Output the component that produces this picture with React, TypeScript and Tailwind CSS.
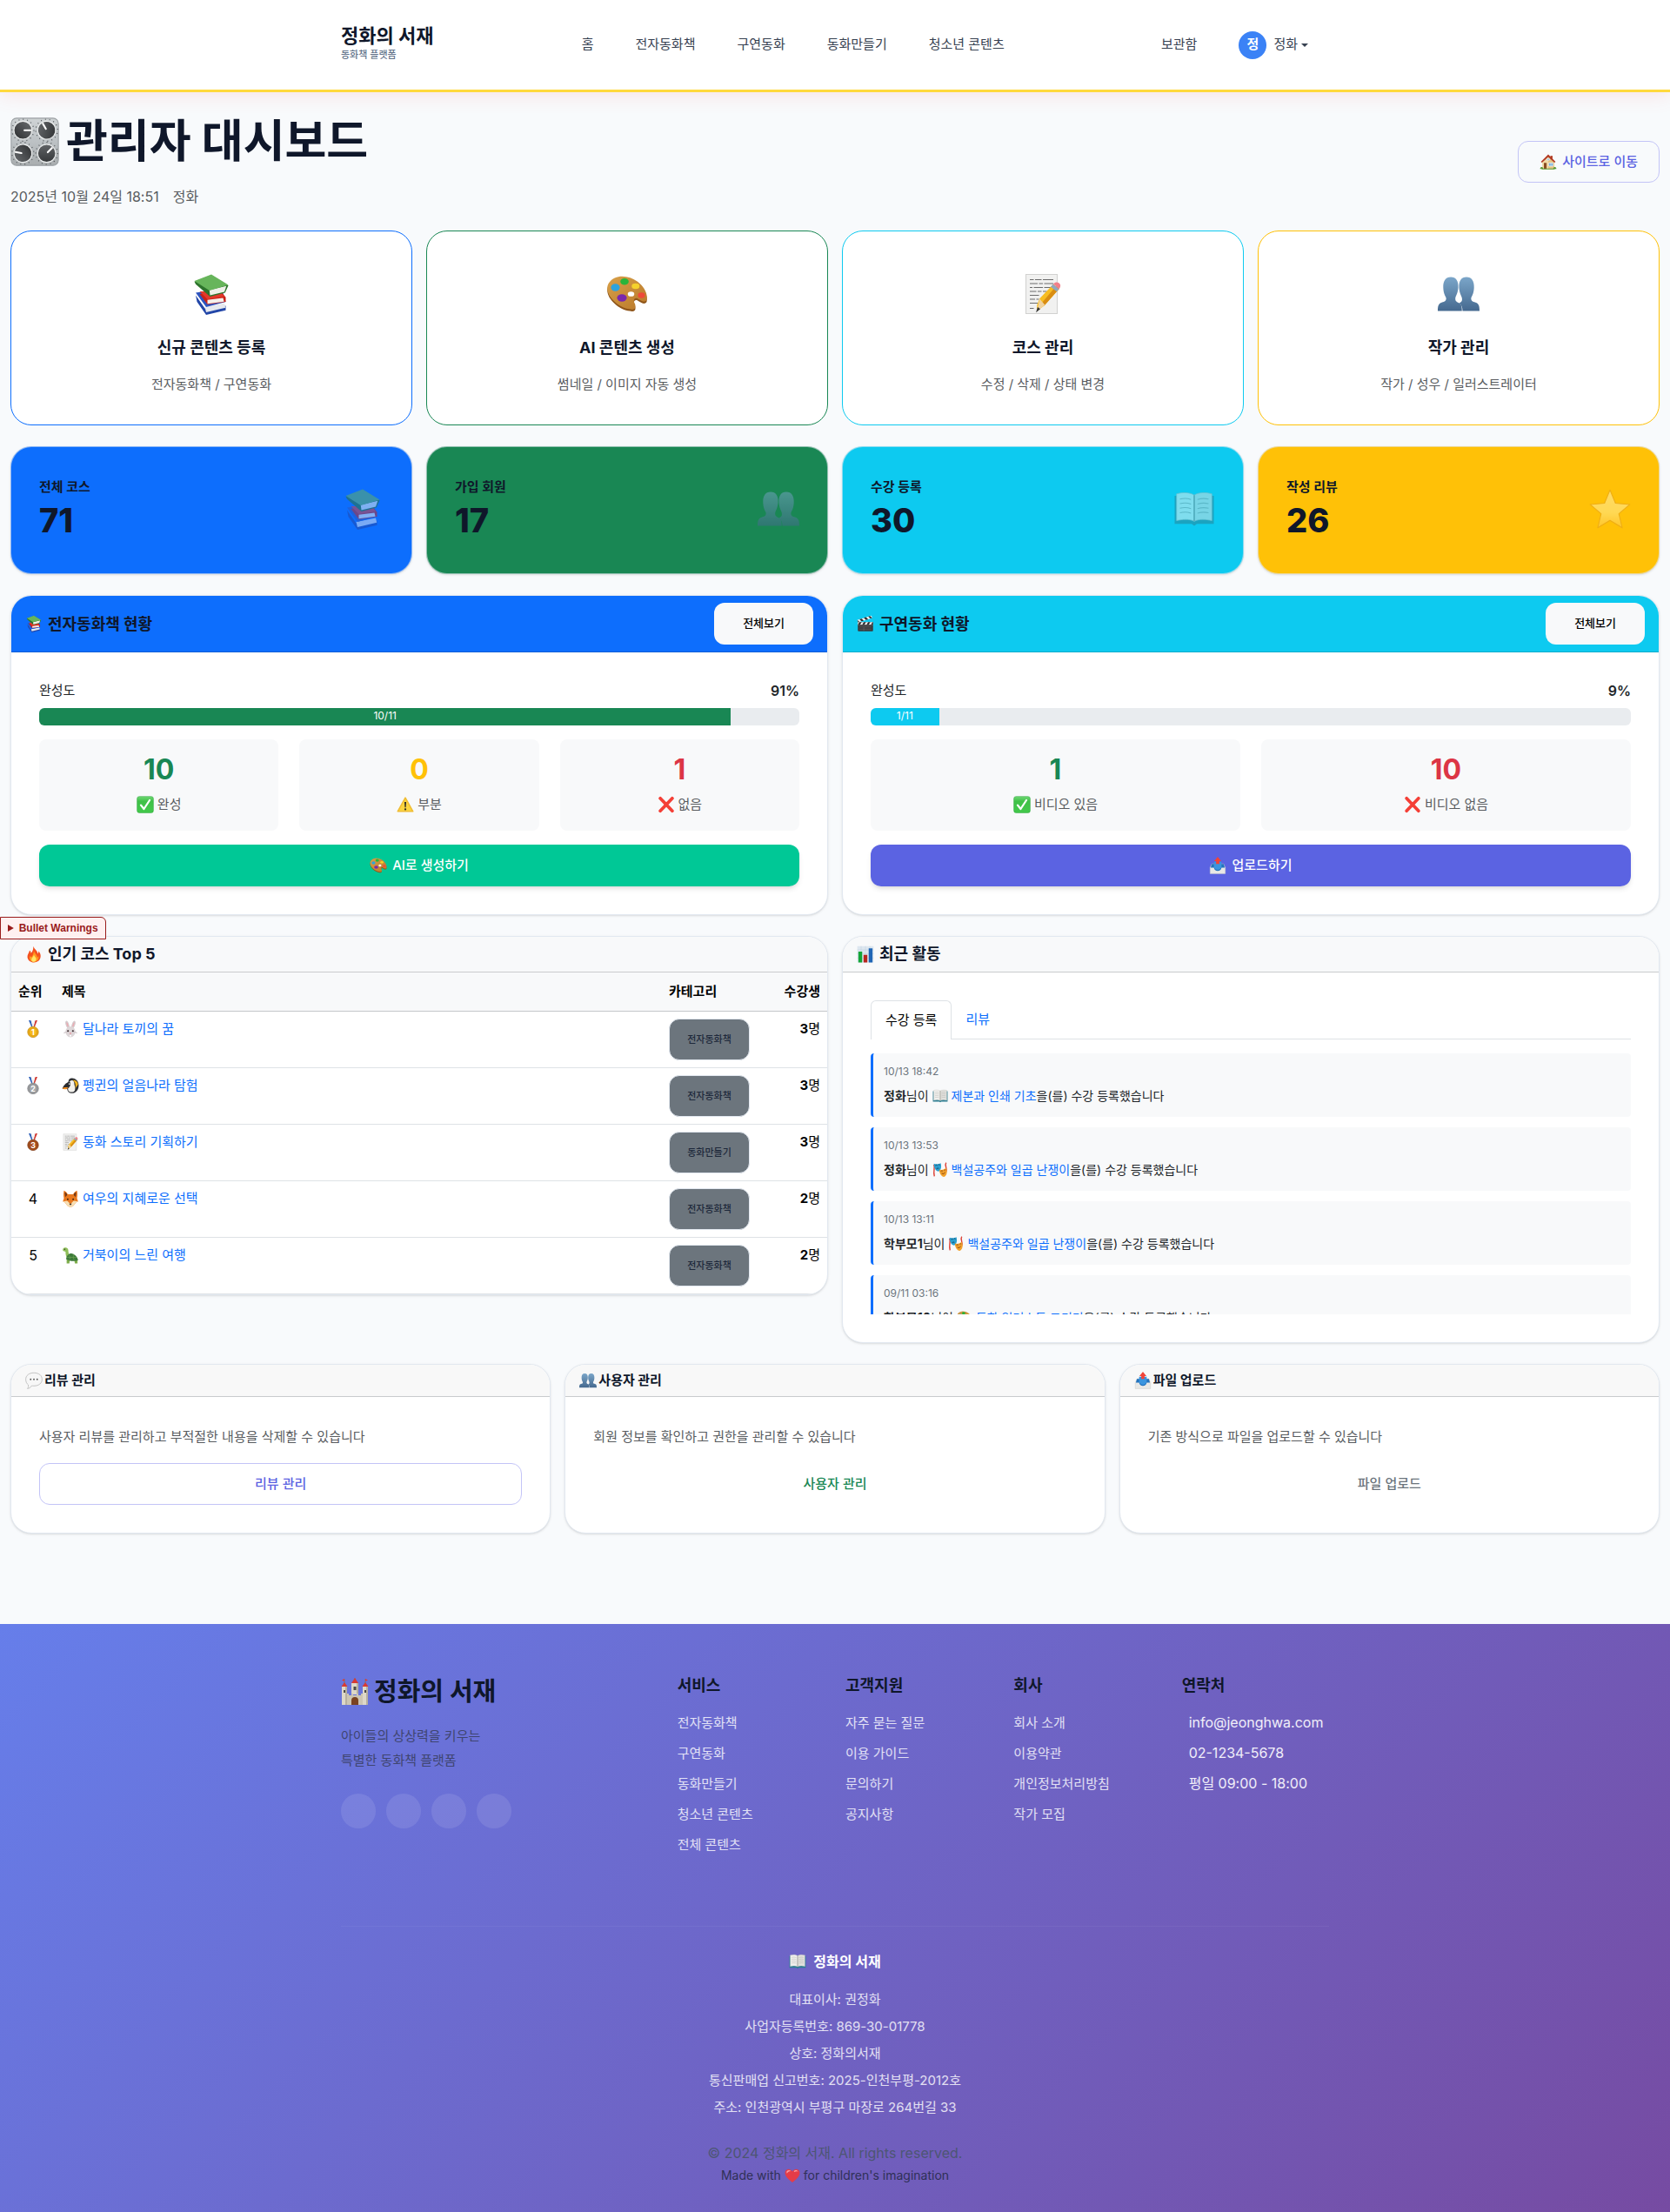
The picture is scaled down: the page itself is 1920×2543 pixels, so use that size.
import React from "react";

const SHAPES: Record<string, React.ReactNode> = {
  knobs: (
    <>
      <rect x="0.5" y="0.5" width="31" height="31" rx="3.5" fill="url(#metal)" stroke="#9a9fa2" strokeWidth="0.6" />
      {[[8.2, 8.4, 90], [23.8, 8.4, -30], [8.2, 23.6, -80], [23.8, 23.6, 45]].map(([x, y, a]) => (
        <g key={`${x}-${y}`} transform={`translate(${x} ${y}) rotate(${a})`}>
          <circle r="7.2" fill="none" stroke="#55595c" strokeWidth="0.7" strokeDasharray="0.6 2.2" />
          <circle r="5.9" fill="url(#knob)" stroke="#eceeee" strokeWidth="0.6" />
          <path d="M0-5V-1" stroke="#fff" strokeWidth="1.2" strokeLinecap="round" />
        </g>
      ))}
    </>
  ),
  house: (
    <>
      <path d="M20 5h4v7h-4z" fill="#b5452c" />
      <path d="M5 15 16 5l11 10v14H5z" fill="#f1d9a5" />
      <path d="M16 5l11 10v14H16z" fill="#e4c384" />
      <path d="M2.5 16 16 2.5 29.5 16l-2 1.5L16 7 4.500 17.500z" fill="#b23a24" />
      <path d="M8 18h5v11H8z" fill="#8a4b22" />
      <path d="M17 18h8v6h-8z" fill="#6fa9d8" stroke="#fff" />
      <path d="M21 18v6M14 10h4v3h-4z" stroke="#fff" fill="#6fa9d8" />
      <path d="M1 29c0-4 5-5 6 0zM25 29c1-5 6-4 6 0zM4 28.500h24v1.500H4z" fill="#5b9a36" />
    </>
  ),
  books: (
    <>
      <path d="m4 17 7 10 16-2v3.500L12 32 5 22z" fill="#2246a8" />
      <path d="m11 26 15-3 .8 3.500L12 30z" fill="#e6e9ef" />
      <path d="M4 15 24 12l3 10-15 4z" fill="#2d55bf" />
      <path d="m7 16 6 8 14-2v-3.500l-4-5z" fill="#c92117" />
      <path d="m13 20.500 12-1.500.7 2.800L13 23.500z" fill="#f4f0ea" />
      <path d="M7 14h16l3 4-13 2z" fill="#e3392b" />
      <path d="M3 6.500 16 1.500l13 8-2.500 5.500L15 18 4 8.500z" fill="#2d742c" />
      <path d="m14.500 13 13-3.200-1.500 4.600L15 17z" fill="#eef1e8" />
      <path d="M3 6 16 1l13 8-14.500 4.300z" fill="#67b55b" />
    </>
  ),
  palette: (
    <>
      <path d="M2 9c5-7 15-6 22-1 5 4 8 9 7 14-2 3-5 0-7-1s-4 1-2 4c1 3 0 5-4 4C9 28-3 17 2 9z" fill="#8f5519" />
      <path d="M2 7.500c5-7 15-6 22-1 5 4 8 9 7 14-2 3-5 0-7-1s-4 1-2 4c1 3 0 5-4 4C9 26.500-3 15.500 2 7.500z" fill="url(#wood)" />
      <ellipse cx="19" cy="16" rx="2.500" ry="1.900" fill="#fff" />
      <ellipse cx="7" cy="11" rx="3.400" ry="2.800" fill="#2ea3dd" />
      <ellipse cx="14" cy="6.500" rx="3.200" ry="2.500" fill="#28b53a" />
      <ellipse cx="22.500" cy="10" rx="3" ry="2.200" fill="#f5d12c" />
      <ellipse cx="27" cy="17" rx="2.700" ry="2.200" fill="#ee4a3b" />
      <ellipse cx="12" cy="19" rx="3.700" ry="2.800" fill="#7a28ad" />
    </>
  ),
  memo: (
    <>
      <path d="M3 1h24v30H3z" fill="#f1f1f0" stroke="#d2d2d0" strokeWidth="0.7" />
      <path d="M6 5h3m1 0h5m1 0h8M6 8h6m1 0h3m1 0h7M6 11h2m1 0h7m1 0h5M6 14h5m1 0h3m1 0h3M6 17h7M6 20h4m1 0h2M6 23h6M6 27h3" stroke="#6d6d6d" strokeWidth="0.7" />
      <path d="m11.500 24.500 2-5L24 8.500l4.500 3.500L17 25l-5.500 4z" fill="#f7bd22" />
      <path d="m17 25-1.500-2.500L26 10l2.500 2z" fill="#d98d12" />
      <path d="m22 10.500 1.800-2 4.600 3.600-1.800 2z" fill="#8fa8bf" />
      <path d="M24 8.300c3-3.300 7.500.2 4.400 3.800z" fill="#f0808a" />
      <path d="m13.500 19.700 4 4.600-6 5z" fill="#f0d3a0" />
      <path d="m12 26 2 1.500-3.300 2.700z" fill="#333" />
    </>
  ),
  people: (
    <g fill="url(#bust)">
      <path d="M10 3c4 0 6 3 5.700 8-.2 4-1.700 6-2.200 8-.3 2.500 1 3 3 4 1.500.8 2 2.500 2 6H0c0-4 .5-5.500 3-6.500 2.500-.8 3.600-1.200 3.400-3.500C5.500 17 4.300 15 4.200 11 4 6 6 3 10 3z" />
      <path d="M22 3c4 0 6 3 5.800 8-.1 4-1.300 6-2.200 8-.2 2.300.9 2.700 3.400 3.500 2.500 1 3 2.500 3 6.500H19c0-3-1-5-2.500-6 1.500-.8 2.500-1.500 2-4-.5-2-2-4-2.200-8C16 6 18 3 22 3z" />
    </g>
  ),
  star: <path d="m16 1.500 4.200 10.200 11 .9-8.400 7.200 2.600 10.700L16 24.800l-9.400 5.700 2.600-10.700-8.400-7.200 11-.9z" fill="url(#gold)" stroke="#e09a20" strokeWidth="0.7" strokeLinejoin="round" />,
  openbook: (
    <>
      <path d="M1 6h30v21.500H18L16 29l-2-1.500H1z" fill="#2a7d92" />
      <path d="M2.500 4.500C8 3 13 3.500 16 5.500v20c-4-2-9-1.500-13.500-.5z" fill="#f1f0ed" stroke="#b9b9b4" strokeWidth="0.5" />
      <path d="M29.500 4.500C24 3 19 3.500 16 5.500v20c4-2 9-1.500 13.500-.5z" fill="#e2e1dd" stroke="#b9b9b4" strokeWidth="0.5" />
      <path d="M16 5.500v20" stroke="#8e8e88" />
      <path d="M5 8.500c3-.7 6-.6 8.500.3M5 12c3-.7 6-.6 8.500.3M5 15.500c3-.7 6-.6 8.500.3M5 19c3-.7 6-.6 8.500.3M18.500 8.800c3-.9 5.500-1 8.500-.3M18.500 12.300c3-.9 5.500-1 8.500-.3M18.500 15.800c3-.9 5.500-1 8.500-.3M18.500 19.300c3-.9 5.500-1 8.500-.3" stroke="#a9a9a5" strokeWidth="0.7" fill="none" />
    </>
  ),
  clapper: (
    <>
      <rect x="2" y="13" width="28" height="17" rx="1.500" fill="#3a3a3c" />
      <path d="M2 13h28v5H2z" fill="#f2f2f2" />
      <path d="m5 13-3 5h4l3-5zm8 0-3 5h4l3-5zm8 0-3 5h4l3-5zm8 0-3 5h4v-5z" fill="#2b2b2d" />
      <path d="M1 9 27 1l1.500 4.500L2.500 13.500z" fill="#f2f2f2" />
      <path d="m5 7.800 4 3.700 4-1.200-4-3.700zm8-2.500 4 3.700 4-1.200-4-3.700zm8-2.500 4 3.700 3.500-1L24.500 2zM1 9l1.500 4.500L5 12.700z" fill="#2b2b2d" />
      <path d="M5 22h22M5 26h22M13 22v7" stroke="#77777b" strokeWidth="0.700" />
    </>
  ),
  check: (
    <>
      <rect x="1" y="1" width="30" height="30" rx="4" fill="url(#green)" stroke="#2aa33a" strokeWidth="0.8" />
      <path d="m8 17 5.500 7L24 8" fill="none" stroke="#fff" strokeWidth="3.600" strokeLinecap="round" strokeLinejoin="round" />
    </>
  ),
  warning: (
    <>
      <path d="M16 3.500 30 28.500H2z" fill="#fcd540" stroke="#f0bd35" strokeWidth="2.500" strokeLinejoin="round" />
      <path d="M14.300 11h3.400l-.8 10h-1.800z" fill="#2f2c25" />
      <circle cx="16" cy="24.700" r="1.800" fill="#2f2c25" />
    </>
  ),
  cross: <path d="m5 4.500 22 23m0-23-22 23" stroke="#f43f36" strokeWidth="6" strokeLinecap="round" />,
  outbox: (
    <>
      <path d="m5 13-3 7v11h28V20l-3-7z" fill="#e8e8e6" stroke="#c5c5c3" strokeWidth="0.7" />
      <path d="M5 13h22l2 7h-6c-1 4-3 6-7 6s-6-2-7-6H3z" fill="#2372bd" />
      <path d="M9 9h14v9c-1 4-3 6-7 6s-6-2-7-6z" fill="#3b95df" />
      <path d="m16 0 6.500 8H19v5h-6V8H9.500z" fill="#f04438" />
    </>
  ),
  fire: (
    <>
      <path d="M15 1c1 5 8 8 8 14 1-1 2-3 1.500-5C28 14 29 18 28 22c-1.300 6-6 9-12 9S4.500 27 4 21c-.3-5 3-7 4-12 2 1 2.500 3 2.500 5C14 11 15 6 15 1z" fill="#f4511e" />
      <path d="M16 9c0 5 6 7 6 13 1-.6 2-2 2.500-3 1 7-3 11-8.500 11-6 0-9.500-5-7.500-11 1 1 2 2 3 2 3-3 4-7 4.500-12z" fill="#ff9a1f" />
      <path d="M16 17c1 4 5 5 4 9-.7 3-2.500 4-4.500 4s-4.500-2-4-5 3.500-4 4.500-8z" fill="#ffe668" />
    </>
  ),
  rabbit: (
    <>
      <path d="M11 15C7 10 5 2 8 1s6 6 6.500 12zm10 0c4-5 6-13 3-14s-6 6-6.500 12z" fill="#d3cacd" />
      <path d="M11 12C9 8 8 4 9 3.500s3 4 3.500 8zm10 0c2-4 3-8 2-8.500s-3 4-3.500 8z" fill="#f0a9b0" />
      <path d="M16 11c6 0 9 5 9 10s-4 10-9 10-9-5-9-10 3-10 9-10z" fill="#ddd6d8" />
      <path d="M4 24c2-3 5-3 6-1m18 1c-2-3-5-3-6-1" stroke="#d3cacd" strokeWidth="2" fill="none" />
      <circle cx="11.500" cy="19.500" r="1.700" fill="#3b2b2e" /><circle cx="20.500" cy="19.500" r="1.700" fill="#3b2b2e" />
      <path d="M14 23h4l-2 2.500z" fill="#e87a85" /><path d="M14.500 27h3v2.500h-3z" fill="#fff" />
    </>
  ),
  penguin: (
    <>
      <path d="M13 5c7-6 17 0 18 9s-5 17-14 16c-6-1-8-7-7-13z" fill="#2f3135" />
      <path d="M15 8c4-3 8-1 8 4s3 7 1 13c-2 4-10 4-12 0-1-5-1-13 3-17z" fill="#f3f1ec" />
      <path d="M20 6c5 3 6 8 5 15l5-7c0-5-5-9-10-8z" fill="#f3b21b" />
      <path d="M15 9C10 9 4 14 1 21c3 2 8 2 12-1 3-3 4-8 2-11z" fill="#2b2d31" />
      <path d="M1 21c3-2 8-2 11-1-3 3-8 4-11 1z" fill="#f08c1f" />
      <circle cx="14" cy="13" r="1.300" fill="#fff" />
    </>
  ),
  fox: (
    <>
      <path d="M4 1c3 1 6 4 7 7h10c1-3 4-6 7-7 1 5 1 10 0 14l2 6-4 2c-3 5-6 8-10 8s-7-3-10-8l-4-2 2-6C3 11 3 6 4 1z" fill="#e9781e" />
      <path d="M5.500 4C8 5 9.500 7 10 9l-3.500 4zm21 0C24 5 22.500 7 22 9l3.500 4z" fill="#6c3516" />
      <path d="m2 21 8-1 6 6 6-6 8 1-4 2c-3 5-6 8-10 8s-7-3-10-8z" fill="#f7dfb4" />
      <circle cx="11" cy="17" r="1.500" fill="#301c10" /><circle cx="21" cy="17" r="1.500" fill="#301c10" />
      <path d="M13.500 25h5L16 28.500z" fill="#33211a" />
    </>
  ),
  turtle: (
    <>
      <path d="M8 2c-4-1-7 2-6 5 1 2 4 1 5 3 0 6 1 10 5 14l5-6c-4-3-5-7-5-11 0-3-2-4-4-5z" fill="#8fbf5a" />
      <path d="M9 23h6l-1 8H9zm14 0 6 1v7h-5z" fill="#7fae4c" />
      <path d="M8 23c1-7 6-11 11-10s10 6 11 12c-6 3-16 2-22-2z" fill="#3d7a3a" />
      <path d="M13 16c3 3 3 6 1 8m8-10c-1 4-1 8 1 11M10 20h17" stroke="#6fa551" fill="none" />
      <circle cx="5.500" cy="5" r="1" fill="#222" />
    </>
  ),
  chart: (
    <>
      <path d="M1 1h30v30H1z" fill="#dde7ef" />
      <path d="M1 8h30M1 15h30M1 23h30M8 1v30M16 1v30M24 1v30" stroke="#b8cddd" strokeWidth="0.7" />
      <path d="M3 11h7v20H3z" fill="#13a538" /><path d="M12.500 17h7v14h-7z" fill="#b8251e" /><path d="M22 5h7v26h-7z" fill="#1f65b5" />
    </>
  ),
  masks: (
    <>
      <path d="M3 5c3 6-2 12 1 24M28 1c-4 6 3 11 0 19" stroke="#dc3f34" strokeWidth="2.500" fill="none" />
      <path d="M3 3c5 2 10 1 14-1 2 7 1 15-5 17C6 18 3 10 3 3z" fill="#2a9fd0" />
      <path d="M6 7q2-2 4 0M12 6q2-2 3 0M8 14q3-3 5-1" stroke="#123f59" strokeWidth="1.500" fill="none" />
      <path d="M14 15c5 2 10 0 14-3 3 7 2 16-4 18-6 0-10-8-10-15z" fill="#f1a12b" />
      <path d="M17 19q2-2 4-1m3-1q2-2 3-1m-8 7q4 3 7-2" stroke="#7a3511" strokeWidth="1.500" fill="none" />
    </>
  ),
  bubble: (
    <>
      <path d="M16 2c9 0 15 5 15 12s-6 12-15 12c-2 0-3-.2-4-.4C10 29 7 31 4 31c2-2 2-4 1.500-7C2.500 22 1 18 1 14 1 7 7 2 16 2z" fill="#f7f7f7" stroke="#b3b3b3" strokeWidth="1.200" />
      <g fill="#555"><circle cx="10" cy="14" r="1.500" /><circle cx="16" cy="14" r="1.500" /><circle cx="22" cy="14" r="1.500" /></g>
    </>
  ),
  castle: (
    <>
      <path d="M4 1v7M16 0v6M28 1v7" stroke="#777" />
      <path d="m4 1-3 1.500L4 4zm24 0 3 1.500L28 4z" fill="#dd3b34" />
      <path d="m4 5 3.500 5h-7zm24 0 3.500 5h-7zM16 0l4 6h-8z" fill="#d83a32" />
      <path d="M1 10h6v21H1zm24 0h6v21h-6zM12 6h8v13h-8z" fill="#ded8c8" />
      <path d="M5 10h2v21H5zm24 0h2v21h-2zM18 6h2v13h-2z" fill="#b7b09f" />
      <path d="M7 18h2v2h3v-2h2v2h4v-2h2v2h3v-2h2v13H7z" fill="#cdc6b4" />
      <path d="M12 31v-5a4 4 0 0 1 8 0v5z" fill="#7a4321" />
      <path d="M3 14h2v3H3zm24 0h2v3h-2zM14.500 10h3v4h-3z" fill="#4d4a45" />
    </>
  ),
  heart: (
    <>
      <path d="M16 30C5 22 1 16 1 10c0-8 11-10 15-2C20 0 31 2 31 10c0 6-4 12-15 20z" fill="#e53c48" />
      <path d="M4 9c1-4 6-5 9-2-4 0-7 2-8 5zM19 7c3-3 7-2 9 1-3-1-6-1-8 1z" fill="#f8a4a8" />
    </>
  ),
};

const MEDALS: Record<string, [string, string]> = {
  "1": ["#f6b81c", "#b57a0b"],
  "2": ["#a5a7aa", "#6f7174"],
  "3": ["#ad5423", "#74330f"],
};

function Icon({ name, className }: { name: string; className: string }) {
  return (
    <svg viewBox="0 0 32 32" aria-hidden="true" fill="none" className={`inline-block shrink-0 ${className}`}>
      {SHAPES[name]}
    </svg>
  );
}

function Medal({ rank }: { rank: string }) {
  const [face, rim] = MEDALS[rank];
  return (
    <svg viewBox="0 0 32 32" role="img" aria-label={`${rank}위`} className="mx-auto my-0.5 size-5">
      <path d="m8 0 5 12h3L12 0z" fill="#2d5fb8" />
      <path d="m24 0-5 12h-3l4-12z" fill="#d23b34" />
      <path d="m12 0 3 12h2l3-12h-2l-2 6-2-6z" fill="#f1f1f1" />
      <circle cx="16" cy="21.500" r="10" fill={face} stroke={rim} />
      <circle cx="16" cy="21.500" r="7.500" fill="none" stroke={rim} strokeWidth="0.700" />
      <text x="16" y="26.500" textAnchor="middle" fontSize="14" fontWeight="700" fill="#fff">
        {rank}
      </text>
    </svg>
  );
}

function Defs() {
  return (
    <svg width="0" height="0" aria-hidden="true" className="absolute">
      <defs>
        <linearGradient id="metal" x2="0" y2="1"><stop stopColor="#cfd3d5" /><stop offset="0.500" stopColor="#bcc1c4" /><stop offset="1" stopColor="#a9adaf" /></linearGradient>
        <linearGradient id="knob" x2="1" y2="1"><stop stopColor="#6a6d70" /><stop offset="1" stopColor="#2c2e30" /></linearGradient>
        <linearGradient id="wood" x2="1" y2="1"><stop stopColor="#d8a049" /><stop offset="1" stopColor="#b9782a" /></linearGradient>
        <linearGradient id="bust" x2="0" y2="1"><stop stopColor="#7ba6c9" /><stop offset="1" stopColor="#45698f" /></linearGradient>
        <linearGradient id="gold" x2="0" y2="1"><stop stopColor="#fff6c8" /><stop offset="0.600" stopColor="#fff0a0" /><stop offset="1" stopColor="#ffc94a" /></linearGradient>
        <linearGradient id="green" x2="0" y2="1"><stop stopColor="#6fd873" /><stop offset="0.300" stopColor="#3fc148" /><stop offset="1" stopColor="#43c94b" /></linearGradient>
      </defs>
    </svg>
  );
}

const NAV = ["홈", "전자동화책", "구연동화", "동화만들기", "청소년 콘텐츠"];

function Header() {
  return (
    <header className="relative border-b-[3px] border-[#ffd93d] bg-white px-3 shadow-[0_4px_20px_rgba(255,107,107,0.15)]">
      <div className="mx-auto flex h-[103px] max-w-[1136px] items-center justify-between pr-6 text-[15px] text-[#374151]">
        <a href="#" className="block pb-1.5">
          <span className="block text-[22px] leading-7 font-bold text-[#0f172a]">정화의 서재</span>
          <span className="block text-[11px] leading-4 font-medium text-[#64748b]">동화책 플랫폼</span>
        </a>
        <nav className="mr-2.5 flex gap-12">
          {NAV.map((n) => (
            <a key={n} href="#">{n}</a>
          ))}
        </nav>
        <div className="flex items-center gap-12">
          <a href="#">보관함</a>
          <button type="button" className="flex items-center gap-2">
            <span className="flex size-8 items-center justify-center rounded-full bg-[#3b82f6] font-bold text-white">정</span>
            <span className="flex items-center gap-1">
              정화
              <svg viewBox="0 0 8 4" aria-hidden="true" className="h-1 w-2 fill-current"><path d="M0 0h8L4 4z" /></svg>
            </span>
          </button>
        </div>
      </div>
    </header>
  );
}

const ACTIONS = [
  { icon: "books", title: "신규 콘텐츠 등록", desc: "전자동화책 / 구연동화", border: "border-[#0d6efd]" },
  { icon: "palette", title: "AI 콘텐츠 생성", desc: "썸네일 / 이미지 자동 생성", border: "border-[#198754]" },
  { icon: "memo", title: "코스 관리", desc: "수정 / 삭제 / 상태 변경", border: "border-[#0dcaf0]" },
  { icon: "people", title: "작가 관리", desc: "작가 / 성우 / 일러스트레이터", border: "border-[#ffc107]" },
];

const STATS = [
  { icon: "books", label: "전체 코스", value: 71, bg: "bg-[#0d6efd]" },
  { icon: "people", label: "가입 회원", value: 17, bg: "bg-[#198754]" },
  { icon: "openbook", label: "수강 등록", value: 30, bg: "bg-[#0dcaf0]" },
  { icon: "star", label: "작성 리뷰", value: 26, bg: "bg-[#ffc107]" },
];

type Tally = { n: number; icon: string; label: string; color: string };
type StatusProps = {
  icon: string; title: string; head: string; done: number; total: number; bar: string;
  tallies: Tally[]; cols: string; action: string; actionIcon: string; actionBg: string;
};

const CARD = "overflow-hidden rounded-3xl border border-[#e2e8f0] bg-white shadow-sm";

function StatusCard(p: StatusProps) {
  const pct = Math.round((p.done / p.total) * 100);
  return (
    <section className={CARD}>
      <div className={`flex items-center justify-between border-b border-black/15 px-4 py-2 ${p.head}`}>
        <h2 className="flex items-center gap-1.5 text-[18px] font-bold text-[#0f172a]">
          <Icon name={p.icon} className="size-5" />
          {p.title}
        </h2>
        <button type="button" className="h-12 rounded-xl bg-[#f8f9fa] px-[33px] text-[13px] font-medium text-black">전체보기</button>
      </div>
      <div className="p-8">
        <div className="mb-2 flex justify-between text-[15px] leading-6">
          <span>완성도</span>
          <strong className="text-[16px] font-semibold">{pct}%</strong>
        </div>
        <div className="h-5 overflow-hidden rounded-md bg-[#e9ecef]">
          <div className={`h-full text-center text-[12px] leading-[17px] text-white ${p.bar}`} style={{ width: `${pct}%` }}>
            {p.done}/{p.total}
          </div>
        </div>
        <div className={`my-4 grid gap-6 ${p.cols}`}>
          {p.tallies.map((t) => (
            <div key={t.label} className="rounded-lg bg-[#f8f9fa] pt-[15px] pb-[18px] text-center">
              <div className={`text-[32px] leading-10 font-bold ${t.color}`}>{t.n}</div>
              <div className="mt-2 flex items-center justify-center gap-1 text-[15px] leading-6 text-[#595c5f]">
                <Icon name={t.icon} className="size-5" />
                {t.label}
              </div>
            </div>
          ))}
        </div>
        <button type="button" className={`flex h-12 w-full items-center justify-center gap-1.5 rounded-xl text-[15px] font-medium text-white shadow-md ${p.actionBg}`}>
          <Icon name={p.actionIcon} className="size-5" />
          {p.action}
        </button>
      </div>
    </section>
  );
}

const COURSES = [
  { icon: "rabbit", title: "달나라 토끼의 꿈", cat: "전자동화책", n: 3 },
  { icon: "penguin", title: "펭귄의 얼음나라 탐험", cat: "전자동화책", n: 3 },
  { icon: "memo", title: "동화 스토리 기획하기", cat: "동화만들기", n: 3 },
  { icon: "fox", title: "여우의 지혜로운 선택", cat: "전자동화책", n: 2 },
  { icon: "turtle", title: "거북이의 느린 여행", cat: "전자동화책", n: 2 },
];

function PanelHead({ icon, title }: { icon: string; title: string }) {
  return (
    <div className="border-b border-[#c9cbcd] bg-[#f8f9fa] px-4 py-2">
      <h2 className="flex items-center gap-1.5 text-[18px] leading-6 font-bold text-[#0f172a]">
        <Icon name={icon} className="size-5" />
        {title}
      </h2>
    </div>
  );
}

function TopCourses() {
  return (
    <section className={CARD}>
      <PanelHead icon="fire" title="인기 코스 Top 5" />
      <table className="w-full border-collapse text-[15px] leading-6 text-black">
        <thead className="bg-[#f8f9fa]">
          <tr className="h-11 border-b border-[#c4c7ca]">
            <th scope="col" className="w-[50px] px-2 text-left font-bold whitespace-nowrap">순위</th>
            <th scope="col" className="px-2 text-left font-bold">제목</th>
            <th scope="col" className="w-[132px] px-2 text-left font-bold">카테고리</th>
            <th scope="col" className="w-[58px] px-2 text-right font-bold whitespace-nowrap">수강생</th>
          </tr>
        </thead>
        <tbody>
          {COURSES.map((c, i) => (
            <tr key={c.title} className="border-b border-[#dee2e6] align-top">
              <td className="px-2 py-2 text-center text-[16px]">{i < 3 ? <Medal rank={String(i + 1)} /> : i + 1}</td>
              <td className="px-2 py-2">
                <a href="#" className="flex items-center gap-1 text-[#0d6efd]">
                  <Icon name={c.icon} className="size-5" />
                  {c.title}
                </a>
              </td>
              <td className="px-2 py-2">
                <span className="flex h-12 w-[93px] items-center justify-center rounded-xl border border-[#e2e8f0] bg-[#6c757d] text-[11px] font-medium text-[#1e293b]">{c.cat}</span>
              </td>
              <td className="px-2 py-2 text-right whitespace-nowrap"><strong>{c.n}</strong>명</td>
            </tr>
          ))}
        </tbody>
      </table>
    </section>
  );
}

const EVENTS = [
  { at: "10/13 18:42", who: "정화", icon: "openbook", what: "제본과 인쇄 기초" },
  { at: "10/13 13:53", who: "정화", icon: "masks", what: "백설공주와 일곱 난쟁이" },
  { at: "10/13 13:11", who: "학부모1", icon: "masks", what: "백설공주와 일곱 난쟁이" },
  { at: "09/11 03:16", who: "학부모10", icon: "palette", what: "동화 일러스트 그리기" },
];

function RecentActivity() {
  return (
    <section className={CARD}>
      <PanelHead icon="chart" title="최근 활동" />
      <div className="p-8">
        <div role="tablist" className="flex border-b border-[#dee2e6] text-[15px]">
          <button type="button" role="tab" aria-selected="true" className="-mb-px h-[45px] rounded-t-md border border-b-0 border-[#dee2e6] bg-white px-4 text-black">수강 등록</button>
          <button type="button" role="tab" aria-selected="false" className="h-11 px-4 text-[#0d6efd]">리뷰</button>
        </div>
        <ul className="mt-4 max-h-[300px] space-y-3 overflow-y-auto [scrollbar-width:none]">
          {EVENTS.map((e) => (
            <li key={e.at} className="rounded border-l-[3px] border-[#0d6efd] bg-[#f8f9fa] p-3">
              <time className="block text-[12px] leading-[18px] text-[#6c757d]">{e.at}</time>
              <p className="mt-[7px] flex items-center text-[14px] leading-6 whitespace-nowrap">
                <strong>{e.who}</strong>님이
                <Icon name={e.icon} className="mx-1 size-[18px]" />
                <a href="#" className="text-[#0d6efd]">{e.what}</a>을(를) 수강 등록했습니다
              </p>
            </li>
          ))}
        </ul>
      </div>
    </section>
  );
}

const TOOLS = [
  { icon: "bubble", title: "리뷰 관리", text: "사용자 리뷰를 관리하고 부적절한 내용을 삭제할 수 있습니다", style: "border border-[#c3c4f7] text-[#5b63e2]" },
  { icon: "people", title: "사용자 관리", text: "회원 정보를 확인하고 권한을 관리할 수 있습니다", style: "text-[#198754]" },
  { icon: "outbox", title: "파일 업로드", text: "기존 방식으로 파일을 업로드할 수 있습니다", style: "text-[#6c757d]" },
];

const LINKS = [
  { title: "서비스", items: ["전자동화책", "구연동화", "동화만들기", "청소년 콘텐츠", "전체 콘텐츠"] },
  { title: "고객지원", items: ["자주 묻는 질문", "이용 가이드", "문의하기", "공지사항"] },
  { title: "회사", items: ["회사 소개", "이용약관", "개인정보처리방침", "작가 모집"] },
];

const COMPANY = [
  "대표이사: 권정화",
  "사업자등록번호: 869-30-01778",
  "상호: 정화의서재",
  "통신판매업 신고번호: 2025-인천부평-2012호",
  "주소: 인천광역시 부평구 마장로 264번길 33",
];

function Footer() {
  return (
    <footer className="bg-[linear-gradient(135deg,#667eea_0%,#764ba2_100%)] px-3 pt-14 pb-[29px]">
      <div className="mx-auto max-w-[1136px]">
        <div className="grid grid-cols-12 gap-6">
          <div className="col-span-4">
            <h2 className="flex items-center gap-1.5 text-[29px] leading-[44px] font-bold text-[#0f172a]">
              <Icon name="castle" className="size-8" />
              정화의 서재
            </h2>
            <p className="mt-[15px] text-[15px] leading-7 text-[#3f4570]">
              아이들의 상상력을 키우는
              <br />
              특별한 동화책 플랫폼
            </p>
            <div className="mt-6 flex gap-3">
              {["Facebook", "Instagram", "YouTube", "Blog"].map((s) => (
                <a key={s} href="#" aria-label={s} className="size-10 rounded-full bg-white/10" />
              ))}
            </div>
          </div>
          {LINKS.map((col) => (
            <div key={col.title} className="col-span-2">
              <h3 className="mb-[14px] text-[18px] leading-[30px] font-bold text-[#0f172a]">{col.title}</h3>
              <ul className="space-y-2 text-[15px] leading-[27px] whitespace-nowrap text-white/80">
                {col.items.map((t) => (
                  <li key={t}><a href="#">{t}</a></li>
                ))}
              </ul>
            </div>
          ))}
          <div className="col-span-2">
            <h3 className="mb-[14px] text-[18px] leading-[30px] font-bold text-[#0f172a]">연락처</h3>
            <ul className="space-y-2 pl-2 text-[16px] leading-[27px] whitespace-nowrap text-white/90">
              <li>info@jeonghwa.com</li>
              <li>02-1234-5678</li>
              <li>평일 09:00 - 18:00</li>
            </ul>
          </div>
        </div>
        <div className="mt-20 border-t border-white/5 pt-6 text-center">
          <h3 className="flex items-center justify-center gap-2 text-[16px] leading-8 font-bold text-white">
            <Icon name="openbook" className="size-5" />
            정화의 서재
          </h3>
          <div className="mt-3 text-[15px] leading-[31px] text-white/80">
            {COMPANY.map((l) => (
              <p key={l}>{l}</p>
            ))}
          </div>
          <p className="mt-6 text-[16px] leading-[26px] text-[#4d5673]">© 2024 정화의 서재. All rights reserved.</p>
          <p className="flex items-center justify-center gap-1 text-[14px] leading-[26px] text-[#2f3057]">
            Made with
            <Icon name="heart" className="size-[18px]" />
            for children's imagination
          </p>
        </div>
      </div>
    </footer>
  );
}

export default function App() {
  return (
    <div className="relative min-h-screen bg-[#f8fafc] font-['Inter','Noto_Sans_CJK_KR',sans-serif] text-[#212529]">
      <Defs />
      <Header />
      <main className="px-3 pt-7 pb-[104px]">
        <div className="mb-[27px] flex items-center justify-between">
          <div>
            <h1 className="flex items-center gap-2 text-[52px] leading-[58px] font-bold text-[#0f172a]">
              <Icon name="knobs" className="size-14" />
              관리자 대시보드
            </h1>
            <p className="mt-[22px] flex gap-4 text-[16px] leading-6 text-[#595c5f]">
              <span>2025년 10월 24일 18:51</span>
              <span>정화</span>
            </p>
          </div>
          <a href="#" className="flex h-12 items-center gap-1.5 rounded-xl border border-[#c3c4f7] px-6 text-[15px] font-medium text-[#5b63e2]">
            <Icon name="house" className="size-5" />
            사이트로 이동
          </a>
        </div>

        <div className="flex flex-col gap-6">
          <div className="grid grid-cols-4 gap-4">
            {ACTIONS.map((a) => (
              <a key={a.title} href="#" className={`rounded-3xl border bg-white px-8 pt-8 pb-[34px] text-center ${a.border}`}>
                <span className="flex h-20 items-center justify-center"><Icon name={a.icon} className="size-12" /></span>
                <span className="mt-2 block text-[18px] leading-7 font-bold text-[#0f172a]">{a.title}</span>
                <span className="mt-4 block text-[15px] leading-6 text-[#595c5f]">{a.desc}</span>
              </a>
            ))}
          </div>

          <div className="grid grid-cols-4 gap-4">
            {STATS.map((s) => (
              <div key={s.label} className={`flex items-center justify-between rounded-3xl border border-[#e2e8f0]/60 px-8 pt-[34px] pb-[37px] text-[#0f172a] shadow-sm ${s.bg}`}>
                <div>
                  <h2 className="text-[15px] leading-6 font-bold">{s.label}</h2>
                  <p className="mt-0.5 text-[38px] leading-[48px] font-extrabold">{s.value}</p>
                </div>
                <Icon name={s.icon} className="size-12 opacity-50" />
              </div>
            ))}
          </div>

          <div className="grid grid-cols-2 gap-4">
            <StatusCard
              icon="books" title="전자동화책 현황" head="bg-[#0d6efd]" done={10} total={11} bar="bg-[#198754]" cols="grid-cols-3"
              tallies={[
                { n: 10, icon: "check", label: "완성", color: "text-[#198754]" },
                { n: 0, icon: "warning", label: "부분", color: "text-[#ffc107]" },
                { n: 1, icon: "cross", label: "없음", color: "text-[#dc3545]" },
              ]}
              action="AI로 생성하기" actionIcon="palette" actionBg="bg-[#00c896]"
            />
            <StatusCard
              icon="clapper" title="구연동화 현황" head="bg-[#0dcaf0]" done={1} total={11} bar="bg-[#0dcaf0]" cols="grid-cols-2"
              tallies={[
                { n: 1, icon: "check", label: "비디오 있음", color: "text-[#198754]" },
                { n: 10, icon: "cross", label: "비디오 없음", color: "text-[#dc3545]" },
              ]}
              action="업로드하기" actionIcon="outbox" actionBg="bg-[#5b63e2]"
            />
          </div>

          <div className="grid grid-cols-2 items-start gap-4">
            <TopCourses />
            <RecentActivity />
          </div>

          <div className="grid grid-cols-3 gap-4">
            {TOOLS.map((t) => (
              <section key={t.title} className={CARD}>
                <h2 className="flex items-center gap-0.5 border-b border-[#c9cbcd] bg-[#f8f8f8] px-4 py-2 text-[15px] leading-5 font-bold text-[#0f172a]">
                  <Icon name={t.icon} className="size-5" />
                  {t.title}
                </h2>
                <div className="p-8">
                  <p className="text-[15px] leading-7 text-[#595c5f]">{t.text}</p>
                  <button type="button" className={`mt-4 h-12 w-full rounded-xl text-[15px] font-medium ${t.style}`}>{t.title}</button>
                </div>
              </section>
            ))}
          </div>
        </div>
      </main>
      <Footer />
      <details className="absolute top-[1054px] left-0 rounded-tr-md border border-[#991b1b] bg-[#fff0f0] px-2 py-1 font-['Liberation_Sans',sans-serif] text-[12px] leading-4 font-bold text-[#991b1b]">
        <summary>Bullet Warnings</summary>
      </details>
    </div>
  );
}
